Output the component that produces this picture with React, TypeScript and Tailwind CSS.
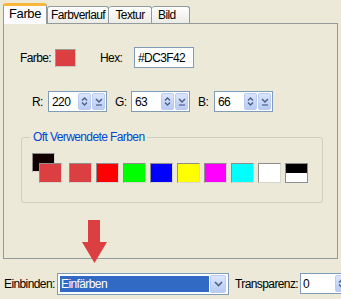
import React from "react";

const font = { fontFamily: '"Liberation Sans", Arial, sans-serif' };

function SpinUpDown() {
  return (
    <div className="w-[13px] h-[17px] shrink-0 bg-gradient-to-b from-[#dbe5fd] to-[#b8cbf5] border border-[#bccbf0] rounded-[2px] flex items-center justify-center">
      <svg width="7" height="9" viewBox="0 0 7 9">
        <path d="M1 3.5 L3.5 1 L6 3.5" stroke="#4d6185" strokeWidth="1.4" fill="none" />
        <path d="M1 5.5 L3.5 8 L6 5.5" stroke="#4d6185" strokeWidth="1.4" fill="none" />
      </svg>
    </div>
  );
}

function DropBtn() {
  return (
    <div className="w-[13px] h-[17px] shrink-0 bg-gradient-to-b from-[#dbe5fd] to-[#b8cbf5] border border-[#bccbf0] rounded-[2px] flex items-center justify-center">
      <svg width="8" height="9" viewBox="0 0 8 9">
        <path d="M1 2 L4 5 L7 2" stroke="#4d6185" strokeWidth="1.5" fill="none" />
        <path d="M1 8 L7 8" stroke="#4d6185" strokeWidth="1.2" />
      </svg>
    </div>
  );
}

function NumField({ value }: { value: string }) {
  return (
    <div className="w-[59px] h-[21px] shrink-0 bg-white border border-[#7f9db9] flex items-center pl-[3px] pr-[1px] gap-[1px]">
      <span className="flex-1 text-black leading-none">{value}</span>
      <SpinUpDown />
      <DropBtn />
    </div>
  );
}

function Swatch({ color, extra = "" }: { color: string; extra?: string }) {
  return (
    <div
      className={`w-[23px] h-[20px] border border-[#8e8e8e] border-r-[#d8d8d0] border-b-[#d8d8d0] ${extra}`}
      style={{ background: color }}
    />
  );
}

export default function App() {
  const colors = ["#DC3F42", "#FF0000", "#00FF00", "#0000FF", "#FFFF00", "#FF00FF", "#00FFFF", "#FFFFFF"];
  return (
    <div className="w-[341px] h-[299px] bg-[#ece9d8] relative overflow-hidden text-[12px] tracking-[-0.6px] text-black" style={font}>
      {/* Tabs */}
      <div className="flex items-end pl-[3px] pt-[3px] h-[24px] relative z-10">
        <div className="w-[44px] h-[21px] bg-[#fcfcfe] border-x border-[#919b9c] border-t-[3px] border-t-[#f8b63a] rounded-t-[3px] flex items-start justify-center pt-[1px]">
          <span className="text-[13px] leading-[14px] tracking-[-0.4px]">Farbe</span>
        </div>
        <div className="w-[62px] h-[17px] mb-[1px] bg-gradient-to-b from-white to-[#ecebe6] border border-b-0 border-[#919b9c] rounded-t-[3px] flex items-center justify-center">
          <span className="leading-none">Farbverlauf</span>
        </div>
        <div className="w-[43px] h-[17px] mb-[1px] bg-gradient-to-b from-white to-[#ecebe6] border border-b-0 border-l-0 border-[#919b9c] rounded-t-[3px] flex items-center justify-center">
          <span className="leading-none">Textur</span>
        </div>
        <div className="w-[38px] h-[17px] mb-[1px] bg-gradient-to-b from-white to-[#ecebe6] border border-b-0 border-l-0 border-[#919b9c] rounded-t-[3px] flex items-center pl-[6px]">
          <span className="leading-none">Bild</span>
        </div>
      </div>

      {/* Panel */}
      <div className="ml-[3px] -mt-[1px] w-[335px] h-[236px] border border-[#919b9c] bg-[#ece9d8] pl-[16px] pt-[23px]">
        <div className="flex items-center h-[21px]">
          <span className="w-[35px] shrink-0">Farbe:</span>
          <div className="w-[21px] h-[18px] shrink-0 bg-[#dc3f42] border border-[#c8c8c0] border-t-[#9a9a90] border-l-[#9a9a90]" />
          <span className="ml-[24px] w-[34px] shrink-0">Hex:</span>
          <div className="w-[60px] h-[21px] shrink-0 bg-white border border-[#7f9db9] flex items-center pl-[3px]">
            <span className="leading-none">#DC3F42</span>
          </div>
        </div>

        <div className="flex items-center mt-[23px] pl-[12px] h-[21px]">
          <span className="w-[16px] shrink-0">R:</span>
          <NumField value="220" />
          <span className="ml-[8px] w-[16px] shrink-0">G:</span>
          <NumField value="63" />
          <span className="ml-[8px] w-[16px] shrink-0">B:</span>
          <NumField value="66" />
        </div>

        {/* Group box */}
        <div className="relative mt-[25px] ml-[1px] w-[302px] h-[66px] border border-[#d0d0bf] rounded-[3px]">
          <span className="absolute -top-[8px] left-[8px] px-[3px] bg-[#ece9d8] text-[#0046d5] leading-[14px]">Oft Verwendete Farben</span>
          <div className="relative flex gap-[4px] pl-[17px] pt-[25px]">
            <div className="absolute left-[10px] top-[15px] w-[23px] h-[19px] bg-[#120000] border border-[#8e8e8e] border-r-[#d8d8d0] border-b-[#d8d8d0]" />
            <Swatch color="#DC3F42" extra="relative" />
            <div className="ml-[3px] flex gap-[4px]">
              {colors.map((c, i) => (
                <Swatch key={i} color={c} />
              ))}
              <div className="w-[23px] h-[20px] border border-[#8e8e8e] flex flex-col">
                <div className="h-[9px] bg-black" />
                <div className="flex-1 bg-white" />
              </div>
            </div>
          </div>
        </div>
      </div>

      {/* Arrow annotation */}
      <svg className="absolute left-[81px] top-[220px]" width="27" height="44" viewBox="0 0 27 44">
        <path d="M7 0 H19 V22 H26 L13.5 43 L1 22 H7 Z" fill="#dc3f42" />
      </svg>

      {/* Bottom row */}
      <div className="flex items-center mt-[13px] pl-[4px] h-[23px]">
        <span className="w-[53px] shrink-0">Einbinden:</span>
        <div className="w-[172px] h-[22px] shrink-0 bg-white border border-[#7f9db9] flex items-center p-[2px] gap-[1px]">
          <div className="flex-1 h-full bg-[#316ac5] flex items-center pl-[1px]">
            <span className="text-white leading-none">Einfärben</span>
          </div>
          <div className="w-[16px] h-[18px] bg-gradient-to-b from-[#dbe5fd] to-[#b8cbf5] border border-[#bccbf0] rounded-[2px] flex items-center justify-center">
            <svg width="9" height="6" viewBox="0 0 9 6">
              <path d="M1 1 L4.5 4.5 L8 1" stroke="#4d6185" strokeWidth="1.6" fill="none" />
            </svg>
          </div>
        </div>
        <span className="ml-[6px] w-[65px] shrink-0">Transparenz:</span>
        <div className="w-[50px] h-[21px] shrink-0 bg-white border border-[#7f9db9] flex items-center pl-[2px] pr-[1px]">
          <span className="flex-1 leading-none">0</span>
          <SpinUpDown />
        </div>
      </div>
    </div>
  );
}
